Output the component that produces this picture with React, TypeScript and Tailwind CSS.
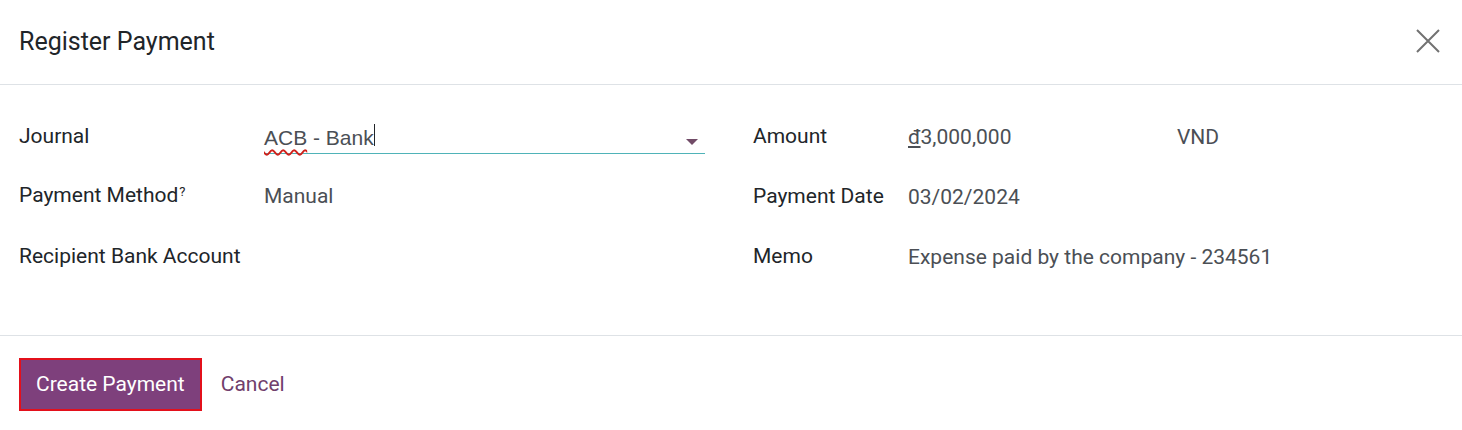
import React from 'react';

const font = { fontFamily: 'Roboto, "Noto Sans", sans-serif' };

const Label: React.FC<{ children: React.ReactNode }> = ({ children }) => (
  <div className="text-[21px] text-[#212529] leading-none">{children}</div>
);

const Value: React.FC<{ children: React.ReactNode }> = ({ children }) => (
  <div className="text-[21px] text-[#4b4f55] leading-none">{children}</div>
);

export default function App() {
  return (
    <div className="w-[1462px] h-[430px] bg-white" style={font}>
      <header className="h-[85px] flex items-center justify-between pl-[19px] pr-[22px] pb-[2px] border-b border-[#dee2e6]">
        <h1 className="text-[25px] text-[#212529] leading-none">Register Payment</h1>
        <button className="text-[#727272]" aria-label="Close">
          <svg width="24" height="24" viewBox="0 0 24 24" fill="none" stroke="currentColor" strokeWidth="2">
            <path d="M1 1L23 23M23 1L1 23" />
          </svg>
        </button>
      </header>

      <main className="h-[251px] border-b border-[#dee2e6] pl-[19px] pt-[35px] grid grid-cols-[686px_1fr] gap-x-[48px]">
        <div className="grid grid-cols-[245px_1fr] auto-rows-[60px]">
          <div className="pt-[6px]"><Label>Journal</Label></div>
          <div className="relative">
            <div className="h-[34px] flex items-start border-b border-[#4fb3b8] pt-[7px]">
              <span className="text-[21px] text-[#4b4f55] leading-none" style={{ fontFamily: '"Liberation Sans", Arial, sans-serif' }}>
                <span className="underline decoration-wavy decoration-[#d0201a] decoration-[1.5px] underline-offset-[4px]">ACB</span> - Bank
              </span>
              <span className="w-px h-[22px] bg-[#212529] -mt-[3px]"></span>
              <span className="ml-auto mr-[7px] mt-[12px] w-0 h-0 border-l-[6px] border-r-[6px] border-t-[6px] border-l-transparent border-r-transparent border-t-[#714b67]"></span>
            </div>
          </div>

          <div className="pt-[5px]">
            <Label>
              Payment Method<sup className="text-[13px] relative -top-[6px] ml-px">?</sup>
            </Label>
          </div>
          <div className="pt-[6px]"><Value>Manual</Value></div>

          <div className="pt-[6px]"><Label>Recipient Bank Account</Label></div>
          <div></div>
        </div>

        <div className="grid grid-cols-[155px_1fr] auto-rows-[60px]">
          <div className="pt-[6px]"><Label>Amount</Label></div>
          <div className="pt-[7px] flex">
            <div className="w-[269px]"><Value><span className="underline underline-offset-[2px]">đ</span>3,000,000</Value></div>
            <Value>VND</Value>
          </div>

          <div className="pt-[6px]"><Label>Payment Date</Label></div>
          <div className="pt-[7px]"><Value>03/02/2024</Value></div>

          <div className="pt-[6px]"><Label>Memo</Label></div>
          <div className="pt-[7px]"><Value>Expense paid by the company - 234561</Value></div>
        </div>
      </main>

      <footer className="flex items-center gap-[19px] pl-[19px] pt-[22px]">
        <button className="h-[53px] px-[15px] bg-[#7e407c] border-2 border-[#e3101b] text-white text-[21px]">
          Create Payment
        </button>
        <button className="text-[21px] text-[#71406c]">Cancel</button>
      </footer>
    </div>
  );
}
